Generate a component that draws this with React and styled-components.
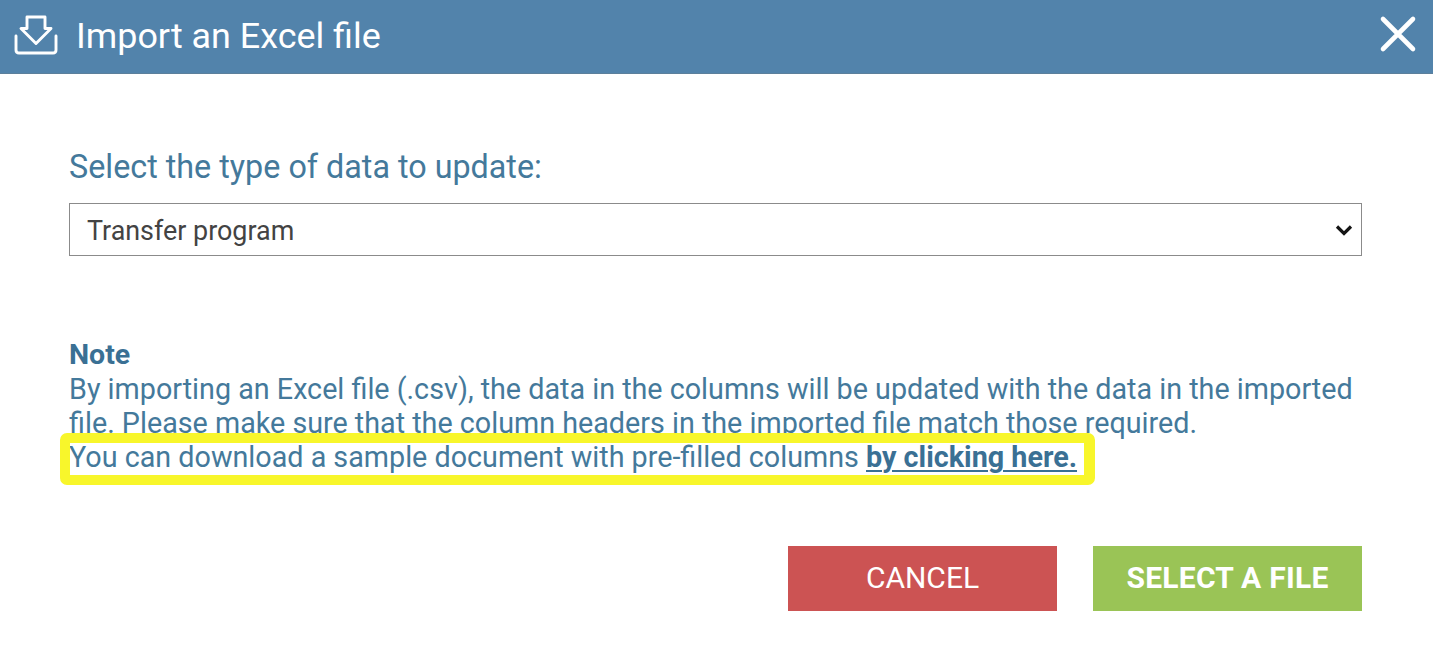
import styled, { createGlobalStyle, css } from "styled-components";
import React from "react";

const GlobalStyle = createGlobalStyle`
	body {
		margin: 0;
		background: #fff;
		font-family: Roboto, "Liberation Sans", sans-serif;
	}

	*,
	*::after {
		box-sizing: border-box;
	}
`;

const Dialog = styled.div`
	width: 100%;
	height: 652px;
	overflow: hidden;
	background: #fff;
	color: #44799b;
`;

const Header = styled.header`
	display: flex;
	align-items: center;
	height: 74px;
	padding: 0 15px 4px 13px;
	background: #5283ab;
	border-bottom: 1px solid #5c7f9b;
	color: #fff;
`;

const ImportIcon = styled.svg`
	width: 46px;
	height: 42px;
	margin-right: 17px;
`;

const Title = styled.h1`
	flex: 1;
	margin: 0;
	padding-top: 3px;
	font-size: 35.9px;
	font-weight: 400;
	line-height: 42px;
`;

const CloseButton = styled.button`
	display: flex;
	padding: 0;
	border: 0;
	background: none;
	color: inherit;
`;

const Body = styled.main`
	padding: 73px 71px 0 69px;
`;

const Label = styled.label`
	display: block;
	height: 40px;
	font-size: 32.3px;
	line-height: 40px;
	white-space: nowrap;
`;

const SelectBox = styled.div`
	display: flex;
	align-items: center;
	justify-content: space-between;
	height: 53px;
	margin-top: 16px;
	padding: 2px 8px 0 17px;
	border: 1px solid #8b8b8b;
	color: #434343;
	font-size: 26.9px;
`;

const Note = styled.section`
	margin-top: 82px;
	font-size: 28.73px;
	line-height: 34.2px;
	white-space: nowrap;
`;

const NoteTitle = styled.h2`
	margin: 0;
	font-size: 28.5px;
	font-weight: 700;
	line-height: 34px;
	color: #3a7094;
`;

const NoteLine = styled.div``;

const Highlighted = styled.div`
	position: relative;
	width: fit-content;

	&::after {
		content: "";
		position: absolute;
		top: -7px;
		left: -9px;
		width: 1035px;
		height: 52px;
		border: 10px solid #f8f62b;
		border-right-width: 11px;
		border-radius: 7px;
	}
`;

const SampleLink = styled.a`
	color: #3a7094;
	font-weight: 700;
	text-decoration: underline;
	text-decoration-thickness: 2px;
	text-underline-offset: 3px;
`;

const Actions = styled.footer`
	display: flex;
	justify-content: flex-end;
	gap: 36px;
	margin-top: 71px;
`;

const Button = styled.button`
	width: 269px;
	height: 65px;
	padding: 0 0 1px;
	border: 0;
	background: #cc5353;
	color: #fff;
	font-family: inherit;
	font-size: 30px;
	font-weight: 400;

	${p => p.$primary && css`
		background: #9ac456;
		font-weight: 700;
		letter-spacing: 0.25px;
	`}
`;

export default function App() {
	return (
		<>
			<GlobalStyle />
			<Dialog>
				<Header>
					<ImportIcon viewBox="0 0 46 42" fill="none" stroke="currentColor" strokeWidth="2.9" strokeLinejoin="round" strokeLinecap="round">
						<path d="M14 3H32V14.5H38L23 29.5L8 14.5H14Z" />
						<path d="M3 22V36Q3 39 6 39H40Q43 39 43 36V22" />
					</ImportIcon>
					<Title>Import an Excel file</Title>
					<CloseButton aria-label="Close">
						<svg width="39" height="39" viewBox="0 0 39 39" fill="none" stroke="currentColor" strokeWidth="4.6" strokeLinecap="round">
							<path d="M4 4L34 34M34 4L4 34" />
						</svg>
					</CloseButton>
				</Header>

				<Body>
					<Label>Select the type of data to update:</Label>
					<SelectBox>
						<span>Transfer program</span>
						<svg width="18" height="14" viewBox="0 0 18 14" fill="none" stroke="#151515" strokeWidth="3.2">
							<path d="M2 2.5L9 9.5L16 2.5" />
						</svg>
					</SelectBox>

					<Note>
						<NoteTitle>Note</NoteTitle>
						<NoteLine>By importing an Excel file (.csv), the data in the columns will be updated with the data in the imported</NoteLine>
						<NoteLine>file. Please make sure that the column headers in the imported file match those required.</NoteLine>
						<Highlighted>
							<NoteLine>
								You can download a sample document with pre-filled columns <SampleLink>by clicking here.</SampleLink>
							</NoteLine>
						</Highlighted>
					</Note>

					<Actions>
						<Button>CANCEL</Button>
						<Button $primary>SELECT A FILE</Button>
					</Actions>
				</Body>
			</Dialog>
		</>
	);
}
